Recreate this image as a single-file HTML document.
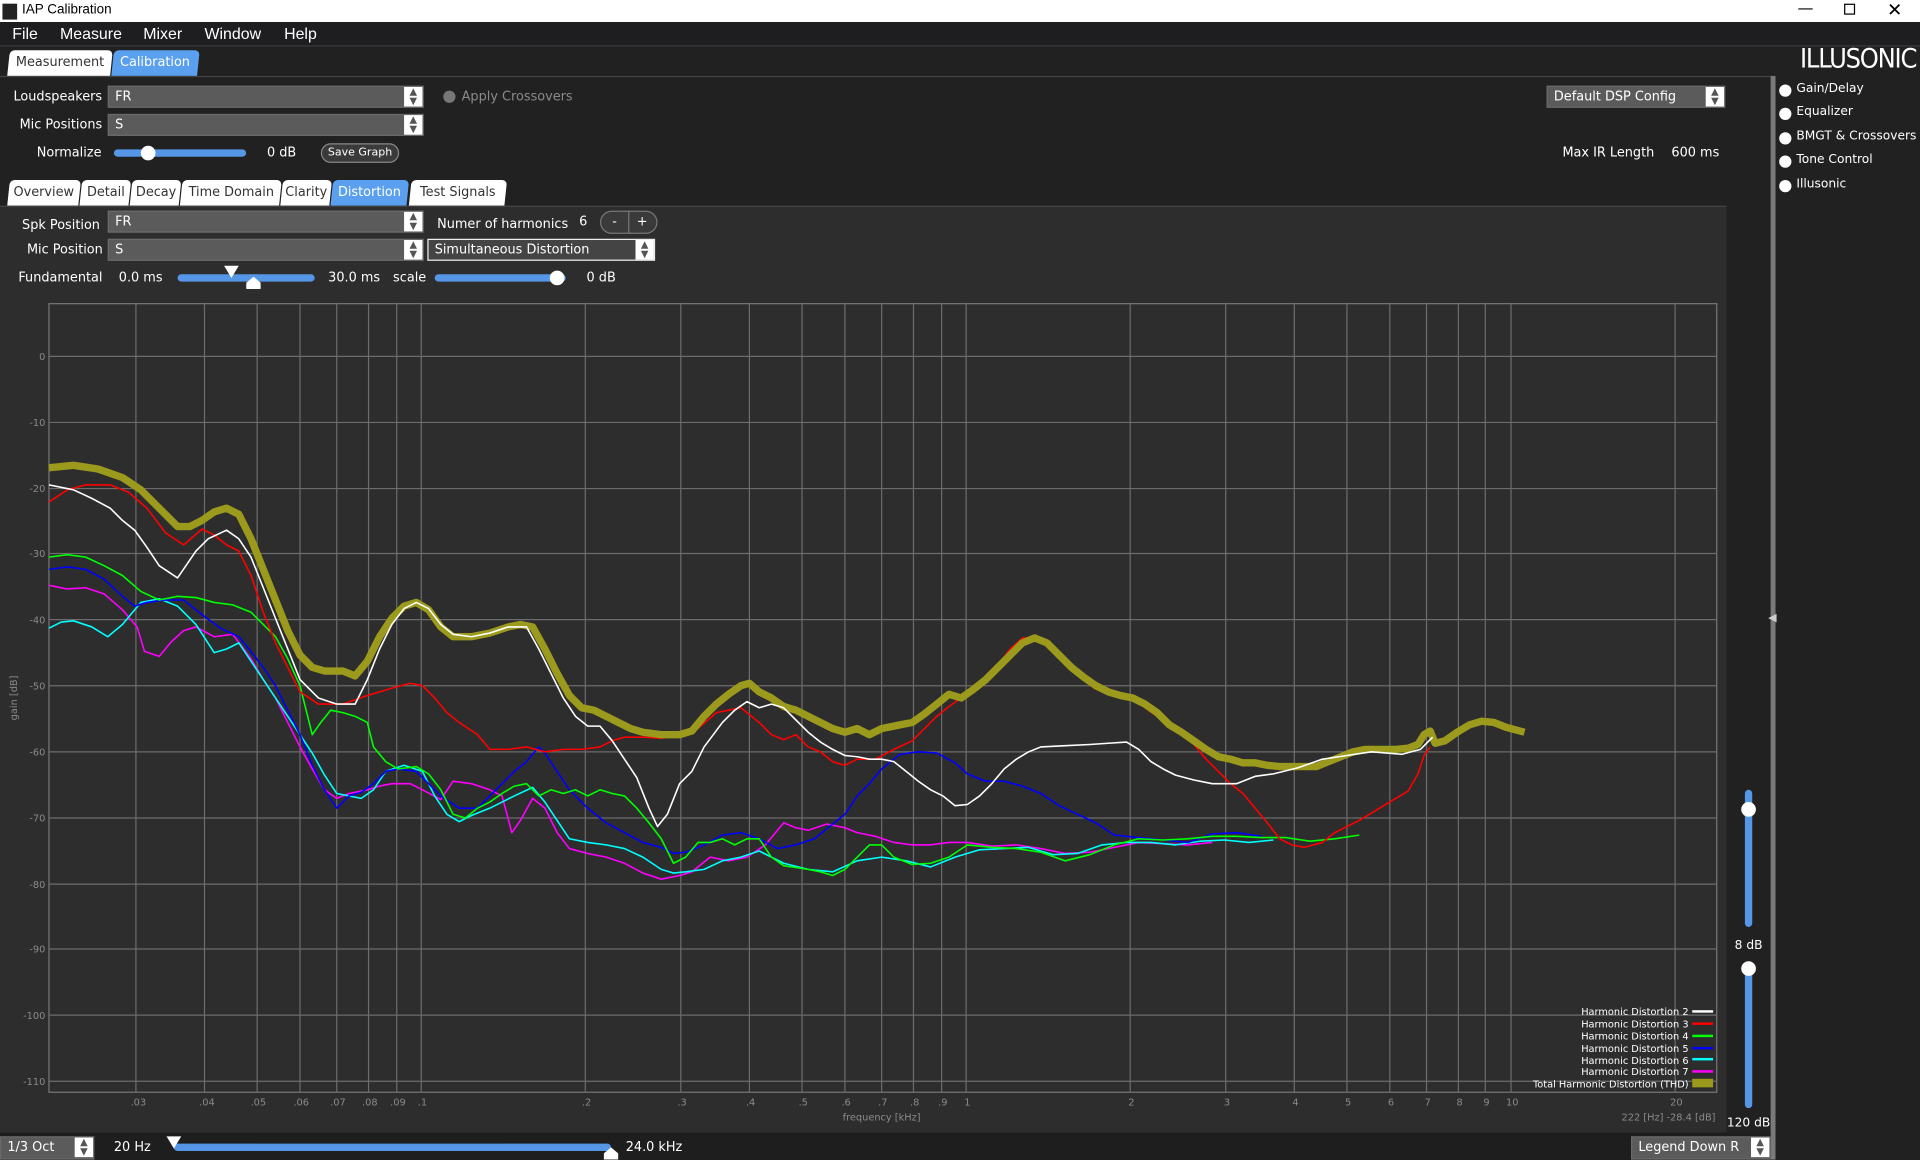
<!DOCTYPE html>
<html><head><meta charset="utf-8"><style>
*{margin:0;padding:0;box-sizing:border-box}
html,body{width:1920px;height:1160px;overflow:hidden;background:#212121}
#w{position:absolute;left:0;top:0;width:1568px;height:947px;transform:scale(1.22449);transform-origin:0 0;background:#212121;font-family:"DejaVu Sans","Liberation Sans",sans-serif;color:#fff;font-size:10.5px}
.a{position:absolute;white-space:nowrap}
.dd{position:absolute;background:#5b5b5b;height:18px;border:1px solid #6a6a6a;font-size:10.5px;line-height:16px;padding-left:5px}
.dd .s{position:absolute;right:0;top:0;width:15px;height:16px;background:#fff;color:#555;font-size:8px;line-height:8px;text-align:center;padding-top:0}
.tab{position:absolute;height:21px;background:#fff;color:#333;font-size:10.5px;line-height:21px;text-align:center;border-radius:4px 4px 0 0;transform:skewX(-6deg)}
.tab span{display:inline-block;transform:skewX(6deg)}
.tab.on{background:#5aa0ef;color:#fff}
.bar{position:absolute;height:6px;background:#5596e6;border-radius:3px}
.knob{position:absolute;width:12px;height:12px;border-radius:6px;background:#fff}
.dot{position:absolute;width:10px;height:10px;border-radius:5px;background:#fff}
.sb{font-size:10px}
</style></head><body><div id="w">
<div class="a" style="left:0;top:0;width:1568px;height:18px;background:#fff"></div>
<div class="a" style="left:2px;top:3px;width:12px;height:13px;background:#222"></div>
<div class="a" style="left:18px;top:2px;color:#000;font-family:'Liberation Sans',sans-serif;font-size:11px">IAP Calibration</div>
<div class="a" style="left:1468px;top:0;color:#000;font-size:13px">&#8212;</div>
<div class="a" style="left:1506px;top:3px;width:9px;height:9px;border:1px solid #000"></div>
<div class="a" style="left:1541px;top:-1px;color:#000;font-size:15px">&#10005;</div>
<div class="a" style="left:0;top:18px;width:1568px;height:20px;background:#1e1e21;border-bottom:1px solid #3c3c3c"></div>
<div class="a" style="top:20px;left:10px;font-family:'Liberation Sans',sans-serif;font-size:13px">File</div>
<div class="a" style="top:20px;left:49px;font-family:'Liberation Sans',sans-serif;font-size:13px">Measure</div>
<div class="a" style="top:20px;left:117px;font-family:'Liberation Sans',sans-serif;font-size:13px">Mixer</div>
<div class="a" style="top:20px;left:167px;font-family:'Liberation Sans',sans-serif;font-size:13px">Window</div>
<div class="a" style="top:20px;left:232px;font-family:'Liberation Sans',sans-serif;font-size:13px">Help</div>
<div class="tab" style="left:7px;top:41px;width:84px"><span>Measurement</span></div>
<div class="tab on" style="left:92px;top:41px;width:70px"><span>Calibration</span></div>
<div class="a" style="left:0;top:62px;width:1446px;height:1px;background:#444"></div>
<div class="a" style="left:1470px;top:36px;font-family:'DejaVu Sans Condensed','Liberation Sans Narrow',sans-serif;font-size:22px;letter-spacing:-1px;font-weight:300">ILLUSONIC</div>
<div class="a" style="left:1446px;top:62px;width:4px;height:885px;background:#7a7a7a"></div>
<div class="a" style="left:1444px;top:500px;color:#ccc;font-size:9px">&#9664;</div>
<div class="dot" style="left:1453px;top:69px"></div><div class="a sb" style="left:1467px;top:67px">Gain/Delay</div>
<div class="dot" style="left:1453px;top:88px"></div><div class="a sb" style="left:1467px;top:86px">Equalizer</div>
<div class="dot" style="left:1453px;top:108px"></div><div class="a sb" style="left:1467px;top:106px">BMGT &amp; Crossovers</div>
<div class="dot" style="left:1453px;top:127px"></div><div class="a sb" style="left:1467px;top:125px">Tone Control</div>
<div class="dot" style="left:1453px;top:147px"></div><div class="a sb" style="left:1467px;top:145px">Illusonic</div>

<div class="a" style="left:11px;top:73px">Loudspeakers</div>
<div class="dd" style="left:88px;top:70px;width:258px">FR<div class="s">&#9650;<br>&#9660;</div></div>
<div class="a" style="left:16px;top:96px">Mic Positions</div>
<div class="dd" style="left:88px;top:93px;width:258px">S<div class="s">&#9650;<br>&#9660;</div></div>
<div class="a" style="left:30px;top:119px">Normalize</div>
<div class="bar" style="left:93px;top:122px;width:108px"></div><div class="knob" style="left:115px;top:119px"></div>
<div class="a" style="left:218px;top:119px">0 dB</div>
<div class="a" style="left:262px;top:117px;width:64px;height:16px;border:1px solid #888;border-radius:8px;background:#3a3a3a;font-size:9px;text-align:center;line-height:14px">Save Graph</div>
<div class="a" style="left:362px;top:74px;width:10px;height:10px;border-radius:5px;background:#777"></div>
<div class="a" style="left:377px;top:73px;color:#8a8a8a">Apply Crossovers</div>
<div class="dd" style="left:1263px;top:70px;width:146px">Default DSP Config<div class="s">&#9650;<br>&#9660;</div></div>
<div class="a" style="left:1276px;top:119px">Max IR Length</div>
<div class="a" style="left:1365px;top:119px">600 ms</div>

<div class="tab" style="left:7px;top:147px;width:58px"><span>Overview</span></div>
<div class="tab" style="left:66px;top:147px;width:40px"><span>Detail</span></div>
<div class="tab" style="left:107px;top:147px;width:40px"><span>Decay</span></div>
<div class="tab" style="left:148px;top:147px;width:81px"><span>Time Domain</span></div>
<div class="tab" style="left:230px;top:147px;width:40px"><span>Clarity</span></div>
<div class="tab on" style="left:271px;top:147px;width:62px"><span>Distortion</span></div>
<div class="tab" style="left:335px;top:147px;width:78px"><span>Test Signals</span></div>

<div class="a" style="left:0;top:168px;width:1410px;height:757px;background:#2d2d2d;border-top:1px solid #444"></div>
<div class="a" style="left:18px;top:178px">Spk Position</div>
<div class="dd" style="left:88px;top:172px;width:258px">FR<div class="s">&#9650;<br>&#9660;</div></div>
<div class="a" style="left:357px;top:177px">Numer of harmonics</div>
<div class="a" style="left:473px;top:175px">6</div>
<div class="a" style="left:490px;top:172px;width:47px;height:19px;border:1px solid #777;border-radius:10px;background:#3a3a3a"></div>
<div class="a" style="left:513px;top:172px;width:1px;height:19px;background:#777"></div>
<div class="a" style="left:500px;top:175px">-</div><div class="a" style="left:520px;top:175px">+</div>
<div class="a" style="left:22px;top:198px">Mic Position</div>
<div class="dd" style="left:88px;top:195px;width:258px">S<div class="s">&#9650;<br>&#9660;</div></div>
<div class="dd" style="left:349px;top:195px;width:186px;background:#444;border:1px solid #eee">Simultaneous Distortion<div class="s">&#9650;<br>&#9660;</div></div>
<div class="a" style="left:15px;top:221px">Fundamental</div>
<div class="a" style="left:97px;top:221px">0.0 ms</div>
<div class="bar" style="left:145px;top:224px;width:112px"></div>
<div class="a" style="left:183px;top:217px;width:0;height:0;border-left:6px solid transparent;border-right:6px solid transparent;border-top:10px solid #fff"></div>
<div class="a" style="left:201px;top:226px;width:12px;height:10px;background:#fff;clip-path:polygon(50% 0,100% 50%,100% 100%,0 100%,0 50%)"></div>
<div class="a" style="left:268px;top:221px">30.0 ms</div>
<div class="a" style="left:321px;top:221px">scale</div>
<div class="bar" style="left:355px;top:224px;width:107px"></div><div class="knob" style="left:449px;top:221px"></div>
<div class="a" style="left:479px;top:221px">0 dB</div>

<svg class="a" style="left:0;top:0" width="1568" height="947" viewBox="0 0 1568 947">
<g stroke="#6c6c6c" stroke-width="1" fill="none">
<rect x="40" y="248" width="1362" height="644" stroke="#777"/>
<path d="M111 248V892M167 248V892M210 248V892M245 248V892M275 248V892M301 248V892M324 248V892M344 248V892M478 248V892M556 248V892M612 248V892M655 248V892M690 248V892M720 248V892M746 248V892M769 248V892M789 248V892M923 248V892M1001 248V892M1057 248V892M1100 248V892M1135 248V892M1165 248V892M1191 248V892M1213 248V892M1234 248V892M1368 248V892"/>
<path d="M40 291H1402M40 345H1402M40 399H1402M40 452H1402M40 506H1402M40 560H1402M40 614H1402M40 668H1402M40 722H1402M40 775H1402M40 829H1402M40 883H1402"/>
</g>
<g fill="#8a8a8a" font-size="8" font-family="DejaVu Sans,sans-serif" text-anchor="end">
<text x="37" y="294">0</text><text x="37" y="348">-10</text><text x="37" y="402">-20</text><text x="37" y="455">-30</text><text x="37" y="509">-40</text><text x="37" y="563">-50</text><text x="37" y="617">-60</text><text x="37" y="671">-70</text><text x="37" y="725">-80</text><text x="37" y="778">-90</text><text x="37" y="832">-100</text><text x="37" y="886">-110</text>
</g>
<g fill="#8a8a8a" font-size="8" font-family="DejaVu Sans,sans-serif" text-anchor="middle">
<text x="113" y="903">.03</text><text x="169" y="903">.04</text><text x="211" y="903">.05</text><text x="246" y="903">.06</text><text x="276" y="903">.07</text><text x="302" y="903">.08</text><text x="325" y="903">.09</text><text x="345" y="903">.1</text><text x="479" y="903">.2</text><text x="557" y="903">.3</text><text x="613" y="903">.4</text><text x="656" y="903">.5</text><text x="691" y="903">.6</text><text x="721" y="903">.7</text><text x="747" y="903">.8</text><text x="770" y="903">.9</text><text x="790" y="903">1</text><text x="924" y="903">2</text><text x="1002" y="903">3</text><text x="1058" y="903">4</text><text x="1101" y="903">5</text><text x="1136" y="903">6</text><text x="1166" y="903">7</text><text x="1192" y="903">8</text><text x="1214" y="903">9</text><text x="1235" y="903">10</text><text x="1369" y="903">20</text>
<text x="720" y="915">frequency [kHz]</text>
<text x="14" y="570" transform="rotate(-90 14 570)">gain [dB]</text>
<text x="1401" y="915" text-anchor="end">222 [Hz] -28.4 [dB]</text>
</g>
<g fill="none" stroke-width="1.3" stroke-linejoin="round">
<polyline stroke="#ff00ff" points="40,478 55,481 70,480 85,485 100,498 112,512 118,532 130,536 140,524 150,515 160,512 175,520 190,518 205,538 215,555 225,570 235,590 245,610 255,628 265,645 275,652 285,648 300,645 310,642 320,640 335,640 345,645 360,653 370,638 385,640 400,645 410,650 418,680 425,670 435,652 445,660 455,680 465,693 480,697 495,700 510,705 525,713 540,718 555,715 565,712 580,700 595,703 610,700 625,690 640,672 650,676 660,678 675,673 690,676 700,680 715,683 730,688 745,690 760,690 775,688 790,688 810,691 830,690 850,693 870,697 890,696 910,692 930,688 950,689 970,690 990,688"/>
<polyline stroke="#00ffff" points="40,513 50,508 60,507 75,512 88,520 100,510 115,492 130,489 145,495 160,510 175,533 185,530 195,525 205,540 215,555 225,570 235,585 245,600 255,615 265,633 275,648 285,650 295,652 305,645 315,630 330,625 345,630 355,650 365,665 375,671 385,666 400,660 410,655 420,650 435,643 445,655 455,670 465,685 480,688 495,690 510,693 525,700 540,710 550,713 560,712 575,710 590,703 605,700 620,695 640,705 660,710 680,712 700,703 720,700 740,703 760,708 780,700 800,694 820,693 840,692 860,698 880,697 900,690 920,688 940,688 960,690 980,687 1000,686 1020,688 1040,686"/>
<polyline stroke="#0000ff" points="40,465 55,463 70,465 85,473 100,487 110,495 120,492 135,490 150,490 165,502 180,513 195,520 205,532 215,545 225,560 235,580 245,600 255,625 265,645 275,660 285,650 295,647 305,640 315,630 325,628 340,630 350,640 360,650 375,660 390,660 400,650 410,640 420,630 430,622 440,610 445,615 455,630 465,645 480,660 495,672 510,680 525,688 540,692 550,697 560,696 575,690 590,682 605,680 620,685 635,693 650,690 665,685 680,673 690,665 700,650 710,640 720,628 735,616 750,614 765,615 780,623 790,632 805,638 820,638 835,642 850,648 865,658 880,665 895,672 910,682 930,684 950,686 970,688 990,681 1010,680 1030,683"/>
<polyline stroke="#00ff00" points="40,455 55,453 70,455 85,462 100,470 115,483 130,490 145,487 160,488 175,492 190,494 205,500 215,510 225,520 235,538 245,560 255,600 262,590 270,580 280,582 290,585 300,590 305,610 315,622 325,628 340,626 350,632 360,645 370,665 380,668 390,660 400,655 410,648 420,642 430,640 440,650 450,645 460,648 470,645 480,650 490,645 500,648 510,650 520,660 530,672 540,685 550,705 560,700 570,688 580,688 590,685 600,690 610,685 620,685 630,700 640,707 660,710 670,712 680,715 690,710 700,700 710,690 720,690 730,700 745,706 760,705 775,700 790,690 810,692 830,693 850,696 870,703 890,698 910,690 930,685 950,686 970,685 990,683 1010,683 1030,684 1050,684 1070,687 1090,685 1110,682"/>
<polyline stroke="#ff0000" points="40,410 55,400 70,396 90,396 105,402 120,415 135,435 150,445 165,432 175,437 185,445 195,450 205,470 215,500 225,525 235,545 245,565 260,575 280,575 300,568 320,562 335,558 345,560 355,570 365,582 375,590 390,600 400,612 415,612 430,610 445,614 460,612 475,612 490,610 500,605 510,602 525,602 540,603 555,600 570,595 585,582 595,580 605,578 610,582 620,590 630,600 640,604 650,600 660,610 670,614 680,622 690,625 700,620 715,620 730,612 745,605 755,595 765,585 775,577 785,570 795,565 805,555 815,543 825,530 835,521 845,521 855,525 865,535 875,545 885,555 895,563 905,565 915,568 925,570 935,578 945,585 955,592 965,600 975,608 985,620 995,630 1005,640 1015,648 1025,660 1035,672 1045,685 1055,690 1065,692 1080,688 1090,680 1100,675 1110,670 1120,664 1130,658 1140,652 1150,646 1158,632 1163,617 1168,610"/>
<polyline stroke="#9c9a1c" stroke-width="6" points="40,382 60,380 80,383 100,390 115,400 130,415 145,430 155,430 165,425 175,418 185,415 195,420 205,440 215,465 225,490 235,515 245,535 255,545 265,548 280,548 290,552 300,540 310,520 320,505 330,495 340,492 350,498 360,512 370,520 385,520 400,517 415,512 425,510 435,512 445,530 455,550 465,568 475,578 485,580 495,585 505,590 515,595 525,598 540,600 555,600 565,597 575,585 585,575 595,567 605,560 612,558 620,565 630,570 640,577 650,580 660,585 670,590 680,595 690,598 700,595 710,600 720,595 735,592 745,590 755,583 765,575 775,567 785,570 795,563 805,555 815,545 825,535 835,525 845,521 855,525 865,535 875,545 885,553 895,560 905,565 915,568 925,570 935,575 945,582 955,592 965,598 975,605 985,612 995,618 1005,620 1015,623 1025,623 1035,625 1045,626 1060,626 1075,626 1085,622 1095,618 1105,614 1115,612 1125,612 1140,612 1150,611 1158,608 1163,600 1168,597 1172,607 1180,605 1190,598 1200,592 1210,589 1220,590 1230,594 1245,598"/>
<polyline stroke="#ffffff" points="40,396 60,400 75,407 90,415 100,425 110,433 120,447 130,462 145,472 160,450 170,440 185,433 195,440 205,455 215,480 225,505 235,530 245,555 260,570 275,575 290,575 300,555 310,530 320,510 330,497 340,492 350,497 360,510 370,518 385,520 400,517 415,512 430,512 440,530 450,550 460,570 470,585 480,593 490,593 500,605 510,620 520,635 530,660 537,675 545,665 555,640 565,630 575,610 590,590 600,580 610,573 620,578 630,575 640,578 650,588 660,598 670,606 680,612 690,617 700,618 710,620 720,620 730,622 740,630 750,638 760,645 770,650 780,658 790,657 800,650 810,640 820,628 830,620 840,614 850,610 870,609 890,608 905,607 920,606 930,612 940,622 950,628 960,633 975,637 990,640 1010,640 1025,634 1040,632 1060,627 1080,620 1100,617 1120,614 1145,616 1160,612 1170,602"/>
</g>
<g fill="#fff" font-size="8" font-family="DejaVu Sans,sans-serif" text-anchor="end">
<text x="1379" y="829">Harmonic Distortion 2</text><text x="1379" y="839">Harmonic Distortion 3</text><text x="1379" y="849">Harmonic Distortion 4</text><text x="1379" y="859">Harmonic Distortion 5</text><text x="1379" y="869">Harmonic Distortion 6</text><text x="1379" y="878">Harmonic Distortion 7</text><text x="1379" y="888">Total Harmonic Distortion (THD)</text>
</g>
<rect x="1382" y="825" width="17" height="2" fill="#fff"/><rect x="1382" y="835" width="17" height="2" fill="#f00"/><rect x="1382" y="845" width="17" height="2" fill="#0f0"/><rect x="1382" y="855" width="17" height="2" fill="#00f"/><rect x="1382" y="864" width="17" height="2" fill="#0ff"/><rect x="1382" y="874" width="17" height="2" fill="#f0f"/><rect x="1382" y="881" width="17" height="7" fill="#9c9a1c"/>
<rect x="1425" y="645" width="6" height="112" rx="3" fill="#5596e6"/><circle cx="1428" cy="661" r="6" fill="#fff"/>
<rect x="1425" y="790" width="6" height="115" rx="3" fill="#5596e6"/><circle cx="1428" cy="791" r="6" fill="#fff"/>
<text x="1428" y="775" fill="#fff" font-size="10" font-family="DejaVu Sans,sans-serif" text-anchor="middle">8 dB</text>
<text x="1428" y="920" fill="#fff" font-size="10" font-family="DejaVu Sans,sans-serif" text-anchor="middle">120 dB</text>
</svg>

<div class="a" style="left:0;top:925px;width:1446px;height:22px;background:#1e1e1e"></div>
<div class="dd" style="left:0;top:928px;width:77px;height:19px">1/3 Oct<div class="s">&#9650;<br>&#9660;</div></div>
<div class="a" style="left:93px;top:931px">20 Hz</div>
<div class="bar" style="left:142px;top:934px;width:357px"></div>
<div class="a" style="left:136px;top:928px;width:0;height:0;border-left:6px solid transparent;border-right:6px solid transparent;border-top:10px solid #fff"></div>
<div class="a" style="left:493px;top:937px;width:12px;height:10px;background:#fff;clip-path:polygon(50% 0,100% 50%,100% 100%,0 100%,0 50%)"></div>
<div class="a" style="left:511px;top:931px">24.0 kHz</div>
<div class="dd" style="left:1332px;top:928px;width:114px;height:19px">Legend Down R<div class="s">&#9650;<br>&#9660;</div></div>
</div></body></html>
